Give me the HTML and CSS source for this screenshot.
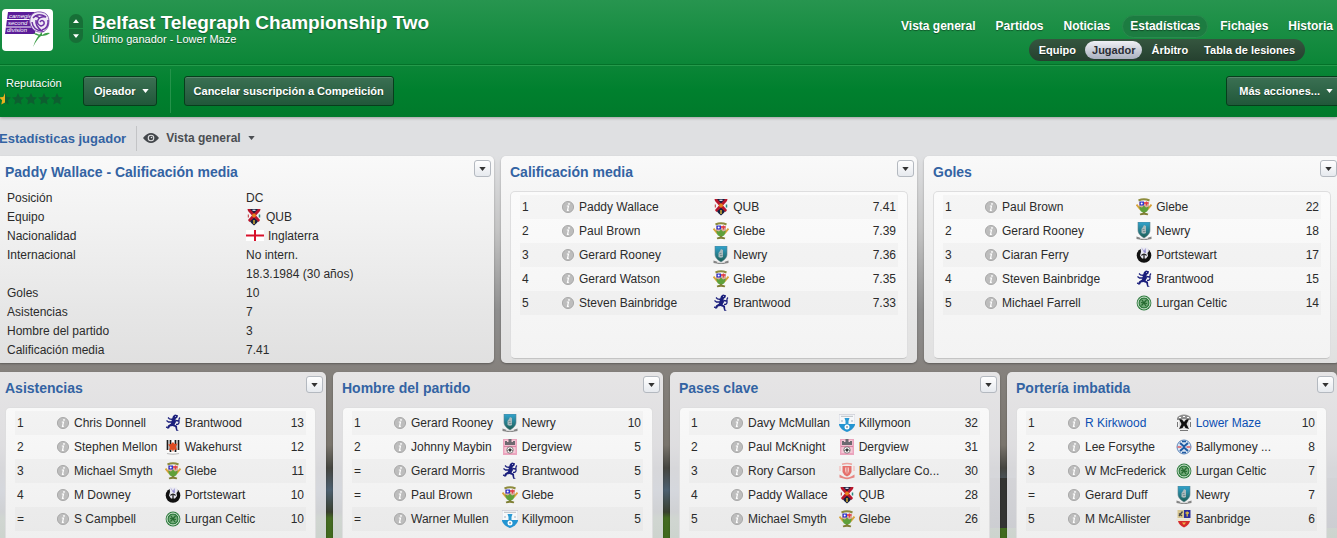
FILE: index.html
```html
<!DOCTYPE html>
<html lang="es">
<head>
    <meta charset="UTF-8">
    <meta name="viewport" content="width=device-width, initial-scale=1.0">
    <title>Belfast Telegraph Championship Two</title>
    <link rel="stylesheet" href="styles.css">
</head>
<body>

    <!-- Shared icons and club badges -->
    <svg class="sprite" aria-hidden="true">
        <symbol id="info" viewBox="0 0 12 12">
            <circle cx="6" cy="6" r="5.6" fill="#bdbdbd" stroke="#a0a0a0" stroke-width=".8"/>
            <circle cx="7" cy="2.9" r=".9" fill="#fff"/>
            <path d="M4.800 5h1.700L5.500 9.300h1.300" fill="none" stroke="#fff" stroke-width="1.200"/>
        </symbol>
        <symbol id="down" viewBox="0 0 8 5"><path d="M0 0h8L4 5z" fill="currentColor"/></symbol>
        <symbol id="star" viewBox="0 0 12 12"><path d="M6 0l1.800 3.900 4.200.5-3.100 2.900.8 4.200L6 9.400l-3.700 2.100.8-4.200L0 4.400l4.200-.5z"/></symbol>
        <symbol id="qub" viewBox="0 0 16 18">
            <path d="M1.500 1h13c-.8 2-.3 4 0 7 0 4-3 7-6.500 9.500C4.500 15 1.500 12 1.500 8c.3-3 .8-5 0-7z" fill="#f4f0f2"/>
            <path d="M3 1h10L8 6.500z" fill="#17203f"/>
            <path d="M3.500 12.500L8 9l4.500 3.500q-1.500 3-4.500 5-3-2-4.500-5z" fill="#17203f"/>
            <path d="M1.500 1h2.600L8 5.500 11.900 1h2.600l-.5 2-4 4.500 4 4.500-1.300 2L8 9.800 3.300 14 2 12l4-4.500L2 3z" fill="#b8162c"/>
            <path d="M2.300 6.500v3" stroke="#b33" stroke-width="1"/>
            <path d="M13.500 6.500v3" stroke="#2b8a80" stroke-width="1.500"/>
            <circle cx="8" cy="7.600" r="2" fill="#e8801c"/>
            <rect x="7" y="12" width="2" height="4" fill="#a58a34"/>
            <path d="M6.500 2.300h3" stroke="#dde" stroke-width="1.300"/>
        </symbol>
        <symbol id="glebe" viewBox="0 0 16 18">
            <path d="M2.500 2.500Q8 0 13.500 2.500" fill="none" stroke="#8d8b3c" stroke-width="2"/>
            <path d="M3 4h10v6l-5 5-5-5z" fill="#d8b0a0"/>
            <path d="M3.500 3.500H8v4H3.500z" fill="#3035cf"/>
            <path d="M8 5h4.500M10.500 3.500v4" stroke="#e33b48" stroke-width="1.300"/>
            <circle cx="5.700" cy="5.500" r="1" fill="#fff"/>
            <path d="M.5 6.500l4 5M15.500 6.500l-4 5" stroke="#d8a33a" stroke-width="2"/>
            <path d="M3 8.500l3 1 2-2 2 2 3-1-1.500 4.500L8 15.500 4.500 13z" fill="#5fa03a"/>
            <path d="M8 14v2M4 16.500q4-1.500 8 0" fill="none" stroke="#807f35" stroke-width="1.800"/>
        </symbol>
        <symbol id="newry" viewBox="0 0 16 18">
            <linearGradient id="sea" x2="0" y2="1"><stop stop-color="#31a4cf"/><stop offset="1" stop-color="#1d5d52"/></linearGradient>
            <path d="M2 0h12v8c0 4-3 6-6 8-3-2-6-4-6-8z" fill="url(#sea)" stroke="#5e7f89" stroke-width=".6"/>
            <path d="M5.500 11V7L7 5l1-2 2 1v7q-2 1.500-4.500 0z" fill="#a9b9bc"/>
            <path d="M6.500 7.500h2M7 9.500h2.500" stroke="#6b8588" stroke-width=".8"/>
            <path d="M.5 14.500l3 1q4.500 2 9 0l3-1v2.500l-3 .5q-4.500 1-9 0l-3-.5z" fill="#858585"/>
            <path d="M4 16.200q4 1.200 8 0" stroke="#eee" fill="none" stroke-width=".8"/>
        </symbol>
        <symbol id="brantwood" viewBox="0 0 16 18">
            <path d="M8 2l2-1.500 3 .8-.5 2.200-2 1.500.5 3-1.500 2.500 2.500 1.500.3 3.500 1.500 1.200h-2.600l-1-3.700L7.500 12 5 12.500l-1 2H2l1-3 3-2 .5-2L7 5z" fill="#1b1f7c"/>
            <path d="M8 5.500L4.500 5 3 3.500M7 8L3.500 8 1.500 6.500M11 10.500q3.500 0 3-3t1-4M10.500 6.500l3 .5M2.800 13.500L1 13.200" fill="none" stroke="#1b1f7c" stroke-width="1.300"/>
            <circle cx="10.500" cy="2.500" r=".5" fill="#dfe0f4"/>
        </symbol>
        <symbol id="portstewart" viewBox="0 0 16 18">
            <circle cx="8" cy="9.500" r="7.300" fill="#111"/>
            <path d="M4.500 1.500h7L13 5l-1.500 2 .5 3-2 2.500H6L4 9.500 5 6z" fill="#e9e9f2"/>
            <path d="M5 1l3 4 1.500-3 .5 5-2-.5z" fill="#8d86cc"/>
            <path d="M5.500 9.500q2.500-3 5 0M8 8v5" fill="none" stroke="#111" stroke-width="1.200"/>
        </symbol>
        <symbol id="lurgan" viewBox="0 0 16 18">
            <circle cx="8" cy="9" r="7.400" fill="#2d7a3d"/>
            <circle cx="8" cy="9" r="6" fill="none" stroke="#d8ead9" stroke-width="1"/>
            <circle cx="8" cy="9" r="4.300" fill="#73aa79"/>
            <path d="M6 6l4 6M10.500 6L5.500 11.500M5 8.500l6 1" stroke="#24692f" stroke-width="1.200"/>
        </symbol>
        <symbol id="wakehurst" viewBox="0 0 16 18">
            <path d="M1 2h14v9q-1 4-7 4t-7-4z" fill="#fff"/>
            <path d="M2.500 2v10M5.500 2v12M10.500 2v12M13.500 2v10" stroke="#1c1c1c" stroke-width="1.700"/>
            <path d="M8 4l1.500 2 3-.5-1.500 3 1 3.500-3-.5L8 14l-1-2.500-3 1L5 9 3 6.500l3-.5z" fill="#dd4b22"/>
            <path d="M2 15.500q6 1.500 12 0" fill="none" stroke="#bbb" stroke-width="1.200"/>
        </symbol>
        <symbol id="dergview" viewBox="0 0 16 18">
            <path d="M1 1h14v16H1z" fill="#eba4bd"/>
            <path d="M2.500 2h11v13h-11z" fill="#f4c9d6"/>
            <path d="M3 7V3h2v1h1.500V1h3v3H11V3h2v4z" fill="#6d6970"/>
            <path d="M2 8.500h12" stroke="#d884a3" stroke-width="1.200"/>
            <circle cx="8" cy="12" r="3.200" fill="#fff" stroke="#555" stroke-width=".7"/>
            <path d="M8 10.500l1.500 1-.6 1.700H7.100l-.6-1.700zM5 12l1 1M11 12l-1 1" fill="#333" stroke="#333" stroke-width=".5"/>
        </symbol>
        <symbol id="killymoon" viewBox="0 0 16 18">
            <path d="M0 .5h16V11q-2 5-8 7-6-2-8-7z" fill="#f6f8fa" stroke="#aab" stroke-width=".4"/>
            <path d="M0 10h16v1q-2 5-8 7-6-2-8-7z" fill="#2495d2"/>
            <path d="M5.500 4h5L9.500 7v4h-3V7z" fill="#2a9ad4"/>
            <path d="M2 2.300h12" stroke="#b9bec4" stroke-width="1"/>
            <path d="M2 6h2v2H2zM12 6h2v2h-2z" fill="#ccd4dc"/>
            <circle cx="8" cy="13" r="2.500" fill="#fff"/>
            <path d="M7 12.500h2l-1 1.700z" fill="#345"/>
        </symbol>
        <symbol id="ballyclare" viewBox="0 0 16 18">
            <path d="M3 2.300Q8 .5 13 2.300" fill="none" stroke="#eca19d" stroke-width="1.500"/>
            <path d="M3.500 4h9v6q-1 3-4.500 4.500Q4.500 13 3.500 10z" fill="#e56f6b"/>
            <path d="M6 5.500h4V9q-.5 2-2 3-1.500-1-2-3z" fill="#f5c3c0"/>
            <path d="M8 5.500v6" stroke="#db6964" stroke-width="1"/>
            <path d="M1 4v5M15 4v5" stroke="#f4c6c3" stroke-width="1.500"/>
            <path d="M.5 12.500l3.500 2q4 2 8 0l3.500-2v3l-4 1q-3.500 1.500-7 0l-4-1z" fill="#e88581"/>
        </symbol>
        <symbol id="lowermaze" viewBox="0 0 16 18">
            <path d="M1 4Q3 .5 8 .5T15 4v2H1z" fill="#8e8e8e"/>
            <path d="M3 3.500h2M7 2.500h2M11 3.500h2" stroke="#fff" stroke-width="1"/>
            <path d="M3 5h10v7l-2 3H5l-2-3z" fill="#ddd"/>
            <path d="M3 5l3 .5L8 8l2-2.500 3-.5-2.500 5 2.500 5-3.500-1L8 11.500 6.500 14 3 15l2.500-5z" fill="#111"/>
            <path d="M1.500 8v5M14.500 8v5M4 16.500h8" stroke="#777" stroke-width="1"/>
        </symbol>
        <symbol id="ballymoney" viewBox="0 0 16 18">
            <circle cx="8" cy="9" r="7" fill="#d9e5f2" stroke="#5c86bb" stroke-width="1"/>
            <path d="M4 5l3.500 3h1L12 5M4 13l3.500-3h1l3.500 3" fill="none" stroke="#215ba3" stroke-width="2"/>
            <path d="M1.500 9h4M10.500 9h4" stroke="#de5b62" stroke-width="1.500"/>
            <path d="M6 3.500h4M6 14.500h4" stroke="#215ba3" stroke-width="1.500"/>
        </symbol>
        <symbol id="banbridge" viewBox="0 0 16 18">
            <path d="M1.500 0H8v8H1.500z" fill="#d8c790"/>
            <path d="M8 0h6.500v8H8z" fill="#2d2f9c"/>
            <path d="M3 6l3.500-4.500M3 3.500L6 6" stroke="#494949" stroke-width="1.300"/>
            <path d="M9.500 3h3.500M11.200 1.500v5" stroke="#e1bc42" stroke-width="1.300"/>
            <path d="M.5 8.500h15v2.500H.5z" fill="#eee4cf"/>
            <path d="M2 11h12q-1 4-6 6.500Q3 15 2 11z" fill="#d62a2a"/>
            <path d="M6 12.500h4l-2 2.500z" fill="#edb84a"/>
        </symbol>
    </svg>

    <header class="header">
        <div class="masthead">
            <svg class="logo" viewBox="0 0 51 42" role="img" aria-label="Carnegie Second Division">
                <rect width="51" height="42" rx="4" fill="#fff"/>
                <path d="M6 3h29l-2 22H3z" fill="#5b1d98"/>
                <path d="M4 10.500h25M4 18h25" stroke="#fff" stroke-width="1"/>
                <text x="7" y="9" class="logo-text">carnegie</text>
                <text x="6" y="16" class="logo-text">second</text>
                <text x="5" y="23" class="logo-text">division</text>
                <path d="M29 7q3-5 10-4 8 1 8 9t-6 11q-7 1-11-4-4-6-1-12z" fill="#efe8f5" stroke="#8b62b4" stroke-width="1"/>
                <path d="M31 9q5-6 13-1-6-1-8 3t3 6q4-1 3-4-2-3-4 0M30 13q1 8 10 9-7-5-6-11M46 11q1 8-6 10M33 7q4 1 4 2" fill="none" stroke="#6d31a3" stroke-width="1.500"/>
                <path d="M40 23q-6 5-9 15 4-8 8-11 6 0 9-3-4-1-8 2z" fill="#3f9f49"/>
                <path d="M37 27q-4-1-6-3 4 0 7 2" fill="#3f9f49"/>
            </svg>
            <div class="stepper">
                <button type="button" aria-label="Anterior"><svg class="arrow up"><use href="#down"/></svg></button>
                <button type="button" aria-label="Siguiente"><svg class="arrow"><use href="#down"/></svg></button>
            </div>
            <div class="heading">
                <h1>Belfast Telegraph Championship Two</h1>
                <p>Último ganador - Lower Maze</p>
            </div>
            <div class="menus">
                <nav class="nav">
                    <a href="#">Vista general</a>
                    <a href="#">Partidos</a>
                    <a href="#">Noticias</a>
                    <a href="#" class="active">Estadísticas</a>
                    <a href="#">Fichajes</a>
                    <a href="#">Historia</a>
                </nav>
                <nav class="subnav">
                    <a href="#">Equipo</a>
                    <a href="#" class="active">Jugador</a>
                    <a href="#">Árbitro</a>
                    <a href="#">Tabla de lesiones</a>
                </nav>
            </div>
        </div>

        <div class="toolbar">
            <div class="reputation">
                <span>Reputación</span>
                <div class="stars">
                    <svg class="star"><use href="#star"/></svg>
                    <svg class="star"><use href="#star"/></svg>
                    <svg class="star"><use href="#star"/></svg>
                    <svg class="star"><use href="#star"/></svg>
                    <svg class="star"><use href="#star"/></svg>
                    <svg class="star half" viewBox="0 0 12 12"><path d="M6 0l-1.800 3.900L0 4.400l3.100 2.900-.8 4.200L6 9.400z"/></svg>
                </div>
            </div>
            <button type="button" class="btn">Ojeador <svg class="arrow"><use href="#down"/></svg></button>
            <span class="divider"></span>
            <button type="button" class="btn wide">Cancelar suscripción a Competición</button>
            <button type="button" class="btn more">Más acciones... <svg class="arrow"><use href="#down"/></svg></button>
        </div>
    </header>

    <div class="viewbar">
        <h2>Estadísticas jugador</h2>
        <button type="button" class="view-btn">
            <svg class="eye" viewBox="0 0 16 10"><path d="M0 5q8-10 16 0-8 10-16 0z" fill="#43474b"/><circle cx="8" cy="5" r="3.300" fill="#e0e1e3"/><circle cx="8" cy="5" r="2.200" fill="#43474b"/><circle cx="8.500" cy="4.500" r=".8" fill="#e0e1e3"/></svg>
            Vista general
            <svg class="arrow"><use href="#down"/></svg>
        </button>
    </div>

    <main>
        <div class="row top">
            <section class="panel">
                <div class="panel-head"><h3>Paddy Wallace - Calificación media</h3><button type="button" class="menu-btn" aria-label="Opciones"><svg class="arrow"><use href="#down"/></svg></button></div>
                <table class="profile">
                    <tr><th>Posición</th><td>DC</td></tr>
                    <tr><th>Equipo</th><td><span class="cell"><svg class="crest"><use href="#qub"/></svg>QUB</span></td></tr>
                    <tr><th>Nacionalidad</th><td><span class="cell"><svg class="flag" viewBox="0 0 18 11"><path d="M0 0h18v11H0z" fill="#fff"/><path d="M0 5.500h18M9 0v11" stroke="#d8122c" stroke-width="2"/></svg>Inglaterra</span></td></tr>
                    <tr><th>Internacional</th><td>No intern.</td></tr>
                    <tr><th></th><td>18.3.1984 (30 años)</td></tr>
                    <tr><th>Goles</th><td>10</td></tr>
                    <tr><th>Asistencias</th><td>7</td></tr>
                    <tr><th>Hombre del partido</th><td>3</td></tr>
                    <tr><th>Calificación media</th><td>7.41</td></tr>
                </table>
            </section>

            <section class="panel">
                <div class="panel-head"><h3>Calificación media</h3><button type="button" class="menu-btn" aria-label="Opciones"><svg class="arrow"><use href="#down"/></svg></button></div>
                <div class="list">
                    <table class="ranking">
                        <tr><td class="pos">1</td><td class="player"><span class="cell"><svg class="info"><use href="#info"/></svg>Paddy Wallace</span></td><td><span class="cell"><svg class="crest"><use href="#qub"/></svg>QUB</span></td><td class="value">7.41</td></tr>
                        <tr><td class="pos">2</td><td class="player"><span class="cell"><svg class="info"><use href="#info"/></svg>Paul Brown</span></td><td><span class="cell"><svg class="crest"><use href="#glebe"/></svg>Glebe</span></td><td class="value">7.39</td></tr>
                        <tr><td class="pos">3</td><td class="player"><span class="cell"><svg class="info"><use href="#info"/></svg>Gerard Rooney</span></td><td><span class="cell"><svg class="crest"><use href="#newry"/></svg>Newry</span></td><td class="value">7.36</td></tr>
                        <tr><td class="pos">4</td><td class="player"><span class="cell"><svg class="info"><use href="#info"/></svg>Gerard Watson</span></td><td><span class="cell"><svg class="crest"><use href="#glebe"/></svg>Glebe</span></td><td class="value">7.35</td></tr>
                        <tr><td class="pos">5</td><td class="player"><span class="cell"><svg class="info"><use href="#info"/></svg>Steven Bainbridge</span></td><td><span class="cell"><svg class="crest"><use href="#brantwood"/></svg>Brantwood</span></td><td class="value">7.33</td></tr>
                    </table>
                </div>
            </section>

            <section class="panel">
                <div class="panel-head"><h3>Goles</h3><button type="button" class="menu-btn" aria-label="Opciones"><svg class="arrow"><use href="#down"/></svg></button></div>
                <div class="list">
                    <table class="ranking">
                        <tr><td class="pos">1</td><td class="player"><span class="cell"><svg class="info"><use href="#info"/></svg>Paul Brown</span></td><td><span class="cell"><svg class="crest"><use href="#glebe"/></svg>Glebe</span></td><td class="value">22</td></tr>
                        <tr><td class="pos">2</td><td class="player"><span class="cell"><svg class="info"><use href="#info"/></svg>Gerard Rooney</span></td><td><span class="cell"><svg class="crest"><use href="#newry"/></svg>Newry</span></td><td class="value">18</td></tr>
                        <tr><td class="pos">3</td><td class="player"><span class="cell"><svg class="info"><use href="#info"/></svg>Ciaran Ferry</span></td><td><span class="cell"><svg class="crest"><use href="#portstewart"/></svg>Portstewart</span></td><td class="value">17</td></tr>
                        <tr><td class="pos">4</td><td class="player"><span class="cell"><svg class="info"><use href="#info"/></svg>Steven Bainbridge</span></td><td><span class="cell"><svg class="crest"><use href="#brantwood"/></svg>Brantwood</span></td><td class="value">15</td></tr>
                        <tr><td class="pos">5</td><td class="player"><span class="cell"><svg class="info"><use href="#info"/></svg>Michael Farrell</span></td><td><span class="cell"><svg class="crest"><use href="#lurgan"/></svg>Lurgan Celtic</span></td><td class="value">14</td></tr>
                    </table>
                </div>
            </section>
        </div>

        <div class="row bottom">
            <section class="panel">
                <div class="panel-head"><h3>Asistencias</h3><button type="button" class="menu-btn" aria-label="Opciones"><svg class="arrow"><use href="#down"/></svg></button></div>
                <div class="list">
                    <table class="ranking">
                        <tr><td class="pos">1</td><td class="player"><span class="cell"><svg class="info"><use href="#info"/></svg>Chris Donnell</span></td><td><span class="cell"><svg class="crest"><use href="#brantwood"/></svg>Brantwood</span></td><td class="value">13</td></tr>
                        <tr><td class="pos">2</td><td class="player"><span class="cell"><svg class="info"><use href="#info"/></svg>Stephen Mellon</span></td><td><span class="cell"><svg class="crest"><use href="#wakehurst"/></svg>Wakehurst</span></td><td class="value">12</td></tr>
                        <tr><td class="pos">3</td><td class="player"><span class="cell"><svg class="info"><use href="#info"/></svg>Michael Smyth</span></td><td><span class="cell"><svg class="crest"><use href="#glebe"/></svg>Glebe</span></td><td class="value">11</td></tr>
                        <tr><td class="pos">4</td><td class="player"><span class="cell"><svg class="info"><use href="#info"/></svg>M Downey</span></td><td><span class="cell"><svg class="crest"><use href="#portstewart"/></svg>Portstewart</span></td><td class="value">10</td></tr>
                        <tr><td class="pos">=</td><td class="player"><span class="cell"><svg class="info"><use href="#info"/></svg>S Campbell</span></td><td><span class="cell"><svg class="crest"><use href="#lurgan"/></svg>Lurgan Celtic</span></td><td class="value">10</td></tr>
                    </table>
                </div>
            </section>

            <section class="panel">
                <div class="panel-head"><h3>Hombre del partido</h3><button type="button" class="menu-btn" aria-label="Opciones"><svg class="arrow"><use href="#down"/></svg></button></div>
                <div class="list">
                    <table class="ranking">
                        <tr><td class="pos">1</td><td class="player"><span class="cell"><svg class="info"><use href="#info"/></svg>Gerard Rooney</span></td><td><span class="cell"><svg class="crest"><use href="#newry"/></svg>Newry</span></td><td class="value">10</td></tr>
                        <tr><td class="pos">2</td><td class="player"><span class="cell"><svg class="info"><use href="#info"/></svg>Johnny Maybin</span></td><td><span class="cell"><svg class="crest"><use href="#dergview"/></svg>Dergview</span></td><td class="value">5</td></tr>
                        <tr><td class="pos">=</td><td class="player"><span class="cell"><svg class="info"><use href="#info"/></svg>Gerard Morris</span></td><td><span class="cell"><svg class="crest"><use href="#brantwood"/></svg>Brantwood</span></td><td class="value">5</td></tr>
                        <tr><td class="pos">=</td><td class="player"><span class="cell"><svg class="info"><use href="#info"/></svg>Paul Brown</span></td><td><span class="cell"><svg class="crest"><use href="#glebe"/></svg>Glebe</span></td><td class="value">5</td></tr>
                        <tr><td class="pos">=</td><td class="player"><span class="cell"><svg class="info"><use href="#info"/></svg>Warner Mullen</span></td><td><span class="cell"><svg class="crest"><use href="#killymoon"/></svg>Killymoon</span></td><td class="value">5</td></tr>
                    </table>
                </div>
            </section>

            <section class="panel">
                <div class="panel-head"><h3>Pases clave</h3><button type="button" class="menu-btn" aria-label="Opciones"><svg class="arrow"><use href="#down"/></svg></button></div>
                <div class="list">
                    <table class="ranking">
                        <tr><td class="pos">1</td><td class="player"><span class="cell"><svg class="info"><use href="#info"/></svg>Davy McMullan</span></td><td><span class="cell"><svg class="crest"><use href="#killymoon"/></svg>Killymoon</span></td><td class="value">32</td></tr>
                        <tr><td class="pos">2</td><td class="player"><span class="cell"><svg class="info"><use href="#info"/></svg>Paul McKnight</span></td><td><span class="cell"><svg class="crest"><use href="#dergview"/></svg>Dergview</span></td><td class="value">31</td></tr>
                        <tr><td class="pos">3</td><td class="player"><span class="cell"><svg class="info"><use href="#info"/></svg>Rory Carson</span></td><td><span class="cell"><svg class="crest"><use href="#ballyclare"/></svg>Ballyclare Co...</span></td><td class="value">30</td></tr>
                        <tr><td class="pos">4</td><td class="player"><span class="cell"><svg class="info"><use href="#info"/></svg>Paddy Wallace</span></td><td><span class="cell"><svg class="crest"><use href="#qub"/></svg>QUB</span></td><td class="value">28</td></tr>
                        <tr><td class="pos">5</td><td class="player"><span class="cell"><svg class="info"><use href="#info"/></svg>Michael Smyth</span></td><td><span class="cell"><svg class="crest"><use href="#glebe"/></svg>Glebe</span></td><td class="value">26</td></tr>
                    </table>
                </div>
            </section>

            <section class="panel">
                <div class="panel-head"><h3>Portería imbatida</h3><button type="button" class="menu-btn" aria-label="Opciones"><svg class="arrow"><use href="#down"/></svg></button></div>
                <div class="list">
                    <table class="ranking">
                        <tr><td class="pos">1</td><td class="player"><span class="cell"><svg class="info"><use href="#info"/></svg><a href="#">R Kirkwood</a></span></td><td><span class="cell"><svg class="crest"><use href="#lowermaze"/></svg><a href="#">Lower Maze</a></span></td><td class="value">10</td></tr>
                        <tr><td class="pos">2</td><td class="player"><span class="cell"><svg class="info"><use href="#info"/></svg>Lee Forsythe</span></td><td><span class="cell"><svg class="crest"><use href="#ballymoney"/></svg>Ballymoney ...</span></td><td class="value">8</td></tr>
                        <tr><td class="pos">3</td><td class="player"><span class="cell"><svg class="info"><use href="#info"/></svg>W McFrederick</span></td><td><span class="cell"><svg class="crest"><use href="#lurgan"/></svg>Lurgan Celtic</span></td><td class="value">7</td></tr>
                        <tr><td class="pos">=</td><td class="player"><span class="cell"><svg class="info"><use href="#info"/></svg>Gerard Duff</span></td><td><span class="cell"><svg class="crest"><use href="#newry"/></svg>Newry</span></td><td class="value">7</td></tr>
                        <tr><td class="pos">5</td><td class="player"><span class="cell"><svg class="info"><use href="#info"/></svg>M McAllister</span></td><td><span class="cell"><svg class="crest"><use href="#banbridge"/></svg>Banbridge</span></td><td class="value">6</td></tr>
                    </table>
                </div>
            </section>
        </div>
    </main>

</body>
</html>
```
FILE: styles.css
```css
* {
    box-sizing: border-box;
}

body {
    margin: 0;
    font-family: "Liberation Sans", Arial, sans-serif;
    font-size: 12px;
    color: #2b2b2b;
    min-height: 100vh;
    display: flex;
    flex-direction: column;
    overflow: hidden;
    background:
        linear-gradient(90deg, transparent 65%, #333432 75%) 0 478px / 100% 50px no-repeat,
        linear-gradient(#dfe0e2 156px, #c4c4c4 230px, #8f8f8f 310px, #85817d 370px, #7a756d 445px, #454540 468px, #4d6070 490px, #39402f 512px, #456b22 518px, #3f6a1c);
}

h1, h2, h3, p {
    margin: 0;
}

a {
    color: inherit;
    text-decoration: none;
}

button {
    font: inherit;
    color: inherit;
    cursor: pointer;
}

.sprite {
    position: absolute;
    width: 0;
    height: 0;
}

.arrow {
    width: 7px;
    height: 4px;
    flex: none;
}

.arrow.up {
    transform: rotate(180deg);
}

/* Green header */
.header {
    background: linear-gradient(#27954f, #00802e 90px, #007a2b);
    color: #fff;
    text-shadow: 0 1px 1px rgba(0,0,0,0.4);
    box-shadow: 0 1px 3px rgba(0,0,0,0.3);
}

.masthead {
    display: flex;
    height: 65px;
    padding-left: 2px;
    border-bottom: 1px solid #047229;
}

.logo {
    width: 51px;
    height: 42px;
    margin-top: 9px;
}

.logo-text {
    font-size: 6px;
    font-style: italic;
    fill: #fff;
    text-shadow: none;
}

.stepper {
    display: flex;
    flex-direction: column;
    gap: 1px;
    width: 14px;
    margin: 14px 9px 0 16px;
}

.stepper button {
    height: 14px;
    padding: 0;
    border: 0;
    display: flex;
    align-items: center;
    justify-content: center;
    background: #176f37;
    border-radius: 7px 7px 0 0;
}

.stepper button:last-child {
    border-radius: 0 0 7px 7px;
}

.stepper .arrow {
    width: 6px;
    height: 4px;
}

.heading {
    padding-top: 12px;
    white-space: nowrap;
}

.heading h1 {
    font-size: 19px;
    line-height: 21px;
}

.heading p {
    font-size: 11px;
    line-height: 13px;
}

.menus {
    margin-left: auto;
    padding-top: 15px;
    font-weight: bold;
    white-space: nowrap;
}

.nav {
    display: flex;
    gap: 4px;
    margin-right: -4px;
}

.nav a {
    padding: 0 7px;
    line-height: 21px;
    border: 1px solid transparent;
    border-radius: 12px;
}

.nav .active {
    background: #1c7c41;
    border-color: #2a8a4e;
}

.subnav {
    display: flex;
    gap: 2px;
    width: max-content;
    margin: 1px 32px 0 auto;
    padding: 2px 3px;
    font-size: 11px;
    background: linear-gradient(#35563f, #25402f);
    border-radius: 11px;
}

.subnav a {
    padding: 0 7px;
    line-height: 18px;
    border-radius: 9px;
}

.subnav .active {
    color: #2b2e36;
    background: linear-gradient(#eff0f4, #a9b0bf);
    text-shadow: none;
}

.toolbar {
    display: flex;
    align-items: flex-start;
    height: 52px;
    padding-top: 10px;
    border-top: 1px solid #259a4b;
    font-size: 11px;
}

.reputation {
    width: 83px;
    line-height: 14px;
}

.reputation span {
    margin-left: 6px;
}

.stars {
    display: flex;
    gap: 1px;
    margin: 3px 0 0 -1px;
    position: relative;
}

.star {
    width: 12px;
    height: 12px;
    fill: #0d5f30;
}

/* The filled half lies over the first star */
.star.half {
    position: absolute;
    left: 0;
    top: 0;
    fill: #e9b41c;
}

.btn {
    display: flex;
    align-items: center;
    gap: 6px;
    height: 30px;
    padding: 0 7px 0 10px;
    font-weight: bold;
    text-shadow: inherit;
    white-space: nowrap;
    border: 1px solid #073e1c;
    border-radius: 3px;
    background: linear-gradient(#3b7053, #21583a);
    box-shadow: inset 0 1px 0 rgba(255,255,255,0.15);
}

.btn.wide {
    padding: 0 9px;
}

.btn.more {
    margin: 0 -4px 0 auto;
    padding-left: 12px;
}

.divider {
    width: 1px;
    height: 44px;
    margin: -7px 13px 0 13px;
    background: #24934a;
}

/* View selector */
.viewbar {
    display: flex;
    align-items: center;
    height: 39px;
    padding-top: 3px;
}

.viewbar h2 {
    font-size: 13px;
    line-height: 25px;
    color: #3363a3;
    margin-left: -1px;
    padding-right: 10px;
    border-right: 1px solid #c3c4c6;
}

.view-btn {
    display: flex;
    align-items: center;
    gap: 7px;
    padding: 0 6px;
    border: 0;
    background: none;
    font-weight: bold;
    color: #4b4e52;
}

.eye {
    width: 16px;
    height: 10px;
}

/* Panels */
main {
    flex: 1;
    display: flex;
    flex-direction: column;
    gap: 9px;
    margin-left: -4px;
}

.row {
    display: grid;
    gap: 7px;
}

.top {
    grid-template-columns: 498fr 416fr 416fr;
    margin-right: -3px;
    min-height: 206px;
}

.bottom {
    grid-template-columns: repeat(4, 1fr);
    flex: 1;
}

.panel {
    display: flex;
    flex-direction: column;
    min-width: 0;
    padding: 0 9px 4px;
    border-radius: 5px;
    background: linear-gradient(rgba(250,250,250,0.97), rgba(228,228,228,0.96));
    box-shadow: 0 1px 2px rgba(0,0,0,0.3);
}

.bottom .panel {
    padding: 0 10px 0 9px;
    border-radius: 5px 5px 0 0;
    background: linear-gradient(rgba(233,232,233,0.97), rgba(228,229,235,0.86));
}

.panel-head {
    display: flex;
    justify-content: space-between;
    height: 35px;
}

.panel-head h3 {
    font-size: 14px;
    line-height: 33px;
    color: #3363a3;
    font-weight: bold;
}

.menu-btn {
    display: flex;
    align-items: center;
    justify-content: center;
    width: 17px;
    height: 17px;
    margin: 4px -6px 0 0;
    padding: 0;
    color: #333;
    border: 1px solid #b4b9c0;
    border-radius: 3px;
    background: linear-gradient(#fff, #e6e9ee);
}

.bottom .menu-btn {
    margin-right: -7px;
}

.list {
    flex: 1;
    padding: 3px 9px;
    border-radius: 5px;
    border: 1px solid #dededf;
    border-bottom-color: #c4c4c4;
    background: linear-gradient(#fbfbfb, #f3f3f3);
}

.bottom .list {
    border-bottom: 0;
    border-radius: 5px 5px 0 0;
    background: linear-gradient(#f9f9f9, #efefef);
}

table {
    width: 100%;
    border-collapse: collapse;
    table-layout: fixed;
}

.ranking td {
    height: 24px;
    padding: 0;
    white-space: nowrap;
}

.ranking tr:nth-child(odd) {
    background: rgba(0,0,0,0.025);
}

.ranking .pos {
    width: 42px;
    padding-left: 2px;
}

.player {
    width: 40%;
}

.bottom .player {
    width: 37%;
}

.ranking .value {
    width: 32px;
    padding-right: 2px;
    text-align: right;
}

.ranking a {
    color: #0b4fb3;
}

.cell {
    display: flex;
    align-items: center;
    gap: 5px;
}

.info {
    width: 12px;
    height: 12px;
    flex: none;
}

.crest {
    width: 16px;
    height: 18px;
    margin-right: -1px;
    flex: none;
}

.flag {
    width: 18px;
    height: 11px;
    margin-right: -1px;
}

.profile {
    margin-top: -3px;
}

.profile th,
.profile td {
    height: 19px;
    padding: 0 0 0 1px;
    font-weight: normal;
    text-align: left;
}

.profile th {
    width: 240px;
    padding-left: 2px;
}
```
